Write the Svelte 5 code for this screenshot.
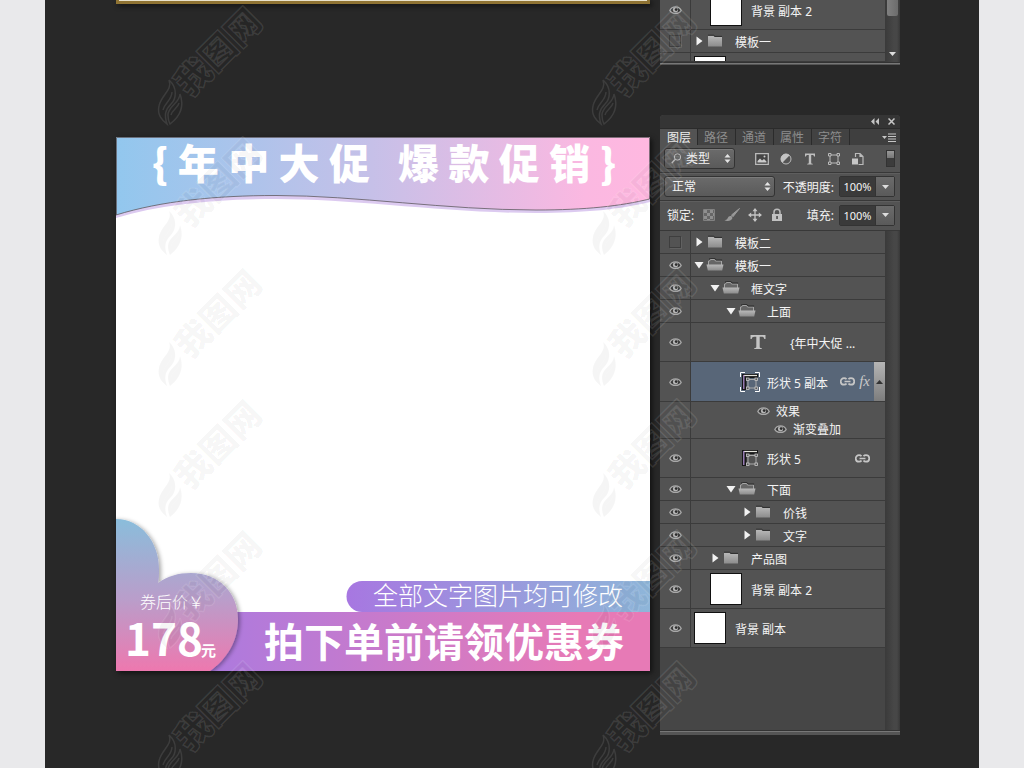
<script>
    let tab = $state('图层');
    const tabs = ['图层', '路径', '通道', '属性', '字符'];

    let layers = $state([
        { name: '模板二', kind: 'closed', level: 0, visible: false },
        { name: '模板一', kind: 'open', level: 0, visible: true },
        { name: '框文字', kind: 'open', level: 1, visible: true },
        { name: '上面', kind: 'open', level: 2, visible: true },
        { name: '{年中大促 ...', kind: 'text', level: 3, visible: true },
        { name: '形状 5 副本', kind: 'shape', level: 3, visible: true, selected: true },
        { name: '', kind: 'effects', level: 3, visible: true },
        { name: '形状 5', kind: 'shape', level: 3, visible: true },
        { name: '下面', kind: 'open', level: 2, visible: true },
        { name: '价钱', kind: 'closed', level: 3, visible: true },
        { name: '文字', kind: 'closed', level: 3, visible: true },
        { name: '产品图', kind: 'closed', level: 1, visible: true },
        { name: '背景 副本 2', kind: 'image', level: 1, visible: true },
        { name: '背景 副本', kind: 'image', level: 0, visible: true },
    ]);

    let previous = $state([
        { name: '背景 副本 2', kind: 'image', level: 1, visible: true },
        { name: '模板一', kind: 'closed', level: 0, visible: false },
    ]);

    const stampColumns = [113, 547];
    const stampRows = [8, 139, 270, 401, 532, 663];
</script>

{#snippet eye()}
    <svg width="13" height="10" viewBox="0 0 13 10">
        <path d="M.8 5.400C3 .6 10 .6 12.200 5.400 10 9.400 3 9.400.8 5.400Z" fill="#3a3a3a" stroke="#a8a8a8" stroke-width="1.300" />
        <circle cx="6.500" cy="4.800" r="2.600" fill="#b4b4b4" />
        <circle cx="7.200" cy="4.600" r="1.400" fill="#2c2c2c" />
    </svg>
{/snippet}

{#snippet link()}
    <svg width="15" height="9" viewBox="0 0 15 9" fill="none" stroke="#c6c6c6" stroke-width="1.700">
        <path d="M6.500 2.300C5.800 1.300 5 1.200 4 1.200a3.200 3.200 0 0 0 0 6.500c1 0 1.900-.2 2.500-1.200M8.500 2.300c.7-1 1.500-1.100 2.500-1.100a3.200 3.200 0 0 1 0 6.500c-1 0-1.900-.2-2.500-1.200M4.500 4.500h6" />
    </svg>
{/snippet}

{#snippet updown()}
    <svg class="updown" width="7" height="9" viewBox="0 0 7 9" fill="#e4e4e4">
        <path d="M3.500 0 6.500 3.500H.5zM3.500 9 .5 5.500h6z" />
    </svg>
{/snippet}

{#snippet folder(open)}
    {#if open}
        <svg class="arrow" width="10" height="10" viewBox="0 0 10 10"><path d="M.5 2h9L5 8.500z" fill="#f2f2f2" /></svg>
        <svg class="folder" width="18" height="14" viewBox="0 0 18 14">
            <path d="M2.500 7V3h1l1-1.500h4L9.500 3h6v4" fill="#666" stroke="#a6a6a6" />
            <path d="M3 1.200 4.400.4h4.500l1.200 1.600h6" fill="none" stroke="#2d2d2d" />
            <path d="M.5 6.500h17L16.200 12.500H1.800z" fill="url(#metal)" />
        </svg>
    {:else}
        <svg class="arrow" width="10" height="10" viewBox="0 0 10 10"><path d="M2.500.5 8.500 5l-6 4.500z" fill="#f2f2f2" /></svg>
        <svg class="folder" width="18" height="14" viewBox="0 0 18 14">
            <path d="M2 12.500V1.800h5.200L8.800 3H16v9.500z" fill="url(#metal)" />
            <path d="M2 1.200h5.500L9 2.400h7" fill="none" stroke="#2d2d2d" />
        </svg>
    {/if}
{/snippet}

{#snippet row(layer)}
    <li class="row {layer.kind}" class:selected={layer.selected}>
        <div class="visibility">
            {#if layer.kind !== 'effects'}
                <button
                    aria-label="切换可见性 {layer.name}"
                    aria-pressed={layer.visible}
                    onclick={() => (layer.visible = !layer.visible)}
                >
                    {#if layer.visible}
                        {@render eye()}
                    {:else}
                        <span class="hidden-box"></span>
                    {/if}
                </button>
            {/if}
        </div>
        <div class="layer level-{layer.level}">
            {#if layer.kind === 'open' || layer.kind === 'closed'}
                {@render folder(layer.kind === 'open')}
                <span class="name">{layer.name}</span>
            {:else if layer.kind === 'image'}
                <span class="thumb"></span>
                <span class="name">{layer.name}</span>
            {:else if layer.kind === 'text'}
                <svg class="type" width="16" height="16" viewBox="0 0 16 16">
                    <path d="M.5 1h15v4h-1.200c-.3-1.600-1-2.300-2.600-2.300H9.700v10c0 1 .5 1.300 2 1.300v1H4.300v-1c1.500 0 2-.3 2-1.300v-10h-2c-1.600 0-2.300.7-2.600 2.300H.5z" fill="#c4c4c4" />
                </svg>
                <span class="name">{layer.name}</span>
            {:else if layer.kind === 'shape'}
                <svg class="vector" width="20" height="20" viewBox="0 0 20 20">
                    <path d="M2 18V2h16v4H6.500v12z" fill="#171717" />
                    <path d="M4 3.500h13" stroke="#e4e4dc" stroke-width="1.200" />
                    <path d="M3.800 17V3" stroke="#b694d8" stroke-width="1.200" />
                    <path d="M8 7.500h8v8.500H8z" fill="none" stroke="#aaa" />
                    <g fill="#555" stroke="#c9c9c9" stroke-width=".8">
                        <rect x="6.500" y="6" width="2.500" height="2.500" /><rect x="15" y="6" width="2.500" height="2.500" />
                        <rect x="6.500" y="15" width="2.500" height="2.500" /><rect x="15" y="15" width="2.500" height="2.500" />
                    </g>
                    {#if layer.selected}
                        <path d="M.5 5V.5H5M15 .5h4.500V5M19.500 15v4.500H15M5 19.500H.5V15" fill="none" stroke="#fff" />
                    {/if}
                </svg>
                <span class="name">{layer.name}</span>
                <span class="marks">
                    {@render link()}
                    {#if layer.selected}
                        <i>fx</i>
                        <button class="collapse" aria-label="收起效果">
                            <svg width="7" height="4" viewBox="0 0 7 4"><path d="M3.500 0 7 4H0z" fill="#333" /></svg>
                        </button>
                    {/if}
                </span>
            {:else}
                <div class="effect">{@render eye()}<span>效果</span></div>
                <div class="effect nested">{@render eye()}<span>渐变叠加</span></div>
            {/if}
        </div>
    </li>
{/snippet}

<svg class="defs" width="0" height="0" aria-hidden="true">
    <linearGradient id="metal" x2="0" y2="1">
        <stop stop-color="#b9b9b9" />
        <stop offset="1" stop-color="#8c8c8c" />
    </linearGradient>
</svg>

<main>
    <section class="pair top">
        <div class="poster-edge"></div>
        <div class="panel tail">
            <div class="list">
                <ul>
                    {#each previous as layer}
                        {@render row(layer)}
                    {/each}
                    <li class="row cut">
                        <div class="visibility"></div>
                        <div class="layer level-0"><span class="thumb"></span></div>
                    </li>
                </ul>
                <div class="scrollbar">
                    <span class="handle"></span>
                    <svg width="7" height="4" viewBox="0 0 7 4"><path d="M0 0h7L3.500 4z" fill="#ddd" /></svg>
                </div>
            </div>
            <div class="foot"></div>
        </div>
    </section>

    <section class="pair">
        <svg class="poster" viewBox="0 0 534 534" lang="zh-CN">
            <defs>
                <linearGradient id="sky">
                    <stop stop-color="#92c7ee" />
                    <stop offset=".48" stop-color="#c6c0e8" />
                    <stop offset=".88" stop-color="#fbb8e1" />
                    <stop offset="1" stop-color="#ffb8e0" />
                </linearGradient>
                <linearGradient id="heart" x2="0" y2="1">
                    <stop stop-color="#8abddb" />
                    <stop offset=".5" stop-color="#ba9dca" />
                    <stop offset=".95" stop-color="#ef77ae" />
                </linearGradient>
                <linearGradient id="pill">
                    <stop stop-color="#a777e1" />
                    <stop offset="1" stop-color="#8eb6d9" />
                </linearGradient>
                <linearGradient id="bar">
                    <stop stop-color="#a77ae2" />
                    <stop offset=".85" stop-color="#e77ab6" />
                </linearGradient>
                <filter id="soft" x="-20%" y="-20%" width="140%" height="140%">
                    <feDropShadow dx="2" dy="1" stdDeviation="2" flood-opacity=".35" />
                </filter>
                <clipPath id="frame"><path d="M0 0h534v534H0z" /></clipPath>
            </defs>
            <path d="M0 0h534v534H0z" fill="#fff" />
            <path d="M0 0V81C45 67 100 62 160 62 240 62 330 76 420 76 470 76 505 72 534 65V0z" fill="#dccaf0" />
            <path d="M0 0V78C45 64 100 58.500 160 58.500 240 58.500 330 73 420 73 470 73 505 69 534 62V0z" fill="url(#sky)" />
            <path d="M.5 78V.5h533V62C505 69 470 73 420 73 330 73 240 58.500 160 58.500 100 58.500 45 64 0 78" fill="none" stroke="#5f5a60" stroke-width=".8" />
            <text class="title" x="268" y="42">{'{ 年 中 大 促   爆 款 促 销 }'}</text>
            <path d="M534 444H246a15.500 15.500 0 0 0 0 31h288z" fill="url(#pill)" />
            <text class="note" x="382" y="468">全部文字图片均可修改</text>
            <path d="M60 475h474v59H60z" fill="url(#bar)" />
            <text class="coupon" x="328" y="520">拍下单前请领优惠券</text>
            <g clip-path="url(#frame)">
                <path d="M-9 382H0C25 382 43 405 43 432 43 438 43 442 42 446 52 439 62 436 75 436 103 436 122 456 122 482 122 504 111 522 94 534L80 544H-9z" fill="url(#heart)" filter="url(#soft)" />
            </g>
            <text class="caption" x="24" y="471">券后价￥</text>
            <text class="price" x="9" y="519">178</text>
            <text class="unit" x="85" y="519">元</text>
        </svg>

        <div class="panel">
            <header>
                <svg width="8" height="7" viewBox="0 0 8 7" fill="#c4c4c4"><path d="M3.500 0v7L0 3.500zM8 0v7L4.500 3.500z" /></svg>
                <svg width="7" height="7" viewBox="0 0 7 7"><path d="m.5.5 6 6M6.500.5l-6 6" stroke="#c8c8c8" stroke-width="1.500" /></svg>
            </header>
            <nav>
                {#each tabs as name}
                    <button class:active={tab === name} onclick={() => (tab = name)}>{name}</button>
                {/each}
                <svg class="menu" width="14" height="9" viewBox="0 0 14 9"><path d="M0 3h5L2.500 6z" fill="#c6c6c6" /><path d="M6 1h8M6 3.500h8M6 6h8M6 8.500h8" stroke="#c6c6c6" /></svg>
            </nav>
            <div class="tools filter">
                <div class="pick">
                    <svg class="lens" width="11" height="11" viewBox="0 0 11 11" fill="none" stroke="#bbb"><circle cx="6.500" cy="4" r="3.200" /><path d="M4 6.500.8 10" stroke-width="1.500" /></svg>
                    <select aria-label="滤镜类型"><option>类型</option></select>
                    {@render updown()}
                </div>
                <div class="icons">
                    <button aria-label="像素图层"><svg width="14" height="14" viewBox="0 0 14 14"><path d="M.7 1.700h12.600v10.600H.7z" fill="#444" stroke="#bbb" stroke-width="1.300" /><path d="M2.500 10.500V9L5 6.500 7 8.500l2-1.500 2.500 2.500v1z" fill="#ccc" /><circle cx="9.500" cy="4.500" r="1" fill="#ccc" /></svg></button>
                    <button aria-label="调整图层"><svg width="14" height="14" viewBox="0 0 14 14"><circle cx="7" cy="7" r="5" fill="#555" stroke="#bbb" /><path d="M10.700 3.300a5.200 5.200 0 1 0-7.400 7.400z" fill="#c4c4c4" /></svg></button>
                    <button aria-label="文字图层"><svg width="14" height="14" viewBox="0 0 14 14"><path d="M2 1.500h10v3h-1c-.2-1.200-.6-1.600-2-1.600H8.200v7.600c0 1 .3 1.200 1.600 1.200v.8H4.200v-.8c1.300 0 1.600-.2 1.600-1.200V2.900H5c-1.400 0-1.800.4-2 1.600H2z" fill="#bebebe" /></svg></button>
                    <button aria-label="形状图层"><svg width="14" height="14" viewBox="0 0 14 14" fill="#535353" stroke="#bbb"><path d="M3 3h8v8H3z" /><path d="M1.500 1.500h2.500v2.500H1.500zM10 1.500h2.500v2.500H10zM1.500 10h2.500v2.500H1.500zM10 10h2.500v2.500H10z" /></svg></button>
                    <button aria-label="智能对象"><svg width="14" height="14" viewBox="0 0 14 14"><path d="M4.500 5V1.500h4.500l3 3v8H7.500M9 1.500v3h3" fill="none" stroke="#bbb" stroke-width="1.200" /><path d="M1 6.500h6v6H1z" fill="#c6c6c6" /></svg></button>
                </div>
                <button class="switch" aria-label="打开或关闭图层过滤"><span></span></button>
            </div>
            <div class="tools">
                <div class="pick wide">
                    <select aria-label="混合模式"><option>正常</option></select>
                    {@render updown()}
                </div>
                <label for="opacity">不透明度:</label>
                <div class="value">
                    <input id="opacity" value="100%" />
                    <button aria-label="不透明度滑块"><svg width="7" height="4" viewBox="0 0 7 4"><path d="M0 0h7L3.500 4z" fill="#ddd" /></svg></button>
                </div>
            </div>
            <div class="tools last">
                <span class="lock">锁定:</span>
                <div class="icons locks">
                    <button aria-label="锁定透明像素"><svg width="14" height="14" viewBox="0 0 14 14"><path d="M1.500 1.500h11v11h-11z" fill="#666" stroke="#818181" /><path d="M2 2h3v3H2zM8 2h3v3H8zM5 5h3v3H5zM2 8h3v3H2zM8 8h3v3H8zM11 5h1v3h-1zM5 11h3v1H5z" fill="#8f8f8f" /></svg></button>
                    <button aria-label="锁定图像像素"><svg width="16" height="14" viewBox="0 0 16 14"><path d="M15.500.5 7.500 7 9 8.700z" fill="#999" stroke="#999" /><path d="M7.500 8C5 7.500 4 9 3.500 10.500 3 11.800 1.500 12 .5 12c2 1.500 7 1.500 8-2z" fill="#999" /></svg></button>
                    <button aria-label="锁定位置"><svg width="14" height="14" viewBox="0 0 14 14" fill="#c4c4c4"><path d="M7 0l2.500 3.200h-5zM7 14l2.500-3.200h-5zM0 7l3.200-2.500v5zM14 7l-3.200-2.500v5z" /><path d="M7 3v8M3 7h8" stroke="#c4c4c4" stroke-width="1.300" /></svg></button>
                    <button aria-label="锁定全部"><svg width="14" height="14" viewBox="0 0 14 14"><path d="M4 7V4.200a3 3 0 0 1 6 0V7" fill="none" stroke="#bbb" stroke-width="1.500" /><path d="M2 6h10v7H2z" fill="#c2c2c2" /><path d="M6.300 8h1.500v3H6.300z" fill="#444" /></svg></button>
                </div>
                <label for="fill">填充:</label>
                <div class="value">
                    <input id="fill" value="100%" />
                    <button aria-label="填充滑块"><svg width="7" height="4" viewBox="0 0 7 4"><path d="M0 0h7L3.500 4z" fill="#ddd" /></svg></button>
                </div>
            </div>
            <div class="list full">
                <ul>
                    {#each layers as layer}
                        {@render row(layer)}
                    {/each}
                </ul>
                <div class="scrollbar"></div>
            </div>
            <div class="foot"></div>
        </div>
    </section>

    <svg class="stamps" aria-hidden="true">
        {#each stampRows as y}
            {#each stampColumns as x}
                <g transform="translate({x} {y})">
                    <path d="M11 72C15 82 3 87 1 98-1 107 4 112 9 116 6 107 7 102 13 96 18 91 20 80 11 72Z" />
                    <path d="M22 86C22 95 10 98 10 107 10 111 11 114 12 116 20 110 27 100 22 86Z" />
                    <path d="M5 102C7 94 14 92 14 84M13 107C14 102 20 100 21 95" fill="none" />
                    <text transform="translate(32 90) rotate(-45)">我图网</text>
                </g>
            {/each}
        {/each}
    </svg>
</main>

<style>
    :global(body) {
        background: #e9e9eb;
    }

    main {
        position: relative;
        margin: 0 45px;
        padding: 0 79px 34px 71px;
        background: #282828;
        overflow: hidden;
        font-family: 'Noto Sans', 'Noto Sans CJK SC', sans-serif;
        font-size: 12px;
        color: #f4f4f4;
    }

    button,
    input,
    select {
        font: inherit;
        color: inherit;
        margin: 0;
        padding: 0;
        border: none;
        background: none;
    }

    button {
        display: flex;
        align-items: center;
        justify-content: center;
    }

    svg {
        display: block;
        flex: none;
    }

    ul {
        list-style: none;
        margin: 0;
        padding: 0;
        flex: 1;
    }

    .defs {
        position: absolute;
    }

    .pair {
        display: grid;
        grid-template-columns: minmax(0, 1fr) 240px;
        column-gap: 10px;
        align-items: start;
    }

    .top {
        margin-bottom: 50px;
    }

    .poster-edge {
        height: 1px;
        background: #e9e2cc;
        border: solid #8f7333;
        border-width: 0 3px 3px;
        box-shadow: 2px 2px 5px #111;
    }

    /* poster artwork */

    .poster {
        width: 100%;
        margin-top: 22px;
        box-shadow: 2px 2px 5px #111;
        font-family: 'Noto Sans CJK SC', sans-serif;
    }

    .poster text {
        fill: #fff;
        white-space: pre;
    }

    .poster .title,
    .poster .note,
    .poster .coupon {
        text-anchor: middle;
    }

    .poster .title {
        font-size: 41px;
        font-weight: 900;
    }

    .poster .note {
        font-size: 25px;
        font-weight: 300;
    }

    .poster .coupon {
        font-size: 40px;
        font-weight: 700;
    }

    .poster .caption {
        font-size: 16px;
        font-weight: 300;
    }

    .poster .price {
        font-size: 44px;
        font-weight: 700;
    }

    .poster .unit {
        font-size: 15px;
        font-weight: 700;
    }

    /* layers panel */

    .panel {
        background: #535353;
        border-radius: 4px 4px 0 0;
        overflow: hidden;
    }

    .tail {
        display: flex;
        flex-direction: column;
        justify-content: flex-end;
        height: 65px;
        border-radius: 0;
    }

    header {
        display: flex;
        align-items: center;
        justify-content: flex-end;
        gap: 9px;
        height: 13px;
        padding-right: 5px;
        background: #353535;
    }

    nav {
        display: flex;
        align-items: center;
        height: 16px;
        background: #3f3f3f;
        border-top: 1px solid #2b2b2b;
    }

    nav button {
        height: 16px;
        padding: 0 7px 0 6px;
        border-right: 1px solid #2b2b2b;
        background: #424242;
        color: #8d8d8d;
    }

    nav button:first-child {
        padding-left: 7px;
        padding-right: 6px;
    }

    nav button.active {
        background: #535353;
        color: #eee;
    }

    nav .menu {
        margin-left: auto;
        margin-right: 4px;
    }

    .tools {
        display: flex;
        align-items: center;
        height: 27px;
        padding: 0 5px 0 4px;
        border-bottom: 1px solid #383838;
    }

    .tools + .tools {
        box-shadow: inset 0 1px #5e5e5e;
    }

    .tools.last {
        height: 28px;
        padding-bottom: 1px;
    }

    .pick {
        display: flex;
        align-items: center;
        box-sizing: border-box;
        width: 71px;
        height: 21px;
        padding: 0 3px 0 6px;
        border: 1px solid #333;
        border-radius: 3px;
        background: linear-gradient(#6b6b6b, #5a5a5a);
        box-shadow: inset 0 1px #7c7c7c;
    }

    .pick select {
        flex: 1;
        min-width: 0;
        height: 19px;
        appearance: none;
        outline: none;
    }

    .lens {
        margin-right: 4px;
    }

    .pick.wide {
        width: 111px;
    }

    .pick.wide select {
        padding-left: 1px;
    }

    .icons {
        display: flex;
        gap: 10px;
        margin-left: 20px;
    }

    .icons.locks {
        gap: 8px;
        margin-left: 8px;
    }

    .switch {
        align-items: flex-start;
        width: 9px;
        height: 17px;
        margin-left: auto;
        border: 1px solid #333;
        background: #3c3c3c;
    }

    .switch span {
        width: 7px;
        height: 7px;
        background: linear-gradient(#999, #777);
    }

    .tools label {
        margin-left: auto;
        margin-right: 5px;
    }

    .lock {
        margin-left: 3px;
    }

    .value {
        display: flex;
        box-sizing: border-box;
        width: 56px;
        height: 21px;
        border: 1px solid #333;
        border-radius: 2px;
    }

    .value input {
        width: 35px;
        min-width: 0;
        background: #3a3a3a;
        font-size: 11px;
        text-align: center;
        outline: none;
    }

    .value button {
        flex: 1;
        border-left: 1px solid #333;
        background: linear-gradient(#6b6b6b, #5a5a5a);
    }

    .list {
        display: flex;
        background: #464646;
    }

    .tail .list {
        align-items: stretch;
    }

    .full {
        min-height: 499px;
    }

    .scrollbar {
        display: flex;
        flex-direction: column;
        align-items: center;
        justify-content: space-between;
        box-sizing: border-box;
        width: 15px;
        padding-bottom: 6px;
        background: linear-gradient(90deg, #3a3a3a, #474747 60%, #474747 80%, #383838);
    }

    .handle {
        width: 11px;
        height: 25px;
        border-radius: 2px;
        background: linear-gradient(90deg, #808080, #6c6c6c);
    }

    .foot {
        height: 4px;
        border-top: 1px solid #333;
        background: #555;
        box-shadow: inset 0 1px #777;
    }

    .tail .foot {
        height: 2px;
        flex: none;
    }

    .row {
        display: flex;
        box-sizing: border-box;
        height: 23px;
        background: #535353;
        border-bottom: 1px solid #3b3b3b;
        white-space: pre;
    }

    .row.text,
    .row.shape,
    .row.image {
        height: 39px;
    }

    .row.selected {
        height: 40px;
    }

    .row.effects {
        height: 37px;
    }

    .row.cut {
        height: 9px;
        overflow: hidden;
    }

    .row.cut .layer {
        align-items: flex-start;
        padding-top: 3px;
    }

    .visibility {
        display: flex;
        align-items: center;
        justify-content: center;
        width: 30px;
        border-right: 1px solid #3b3b3b;
    }

    .hidden-box {
        width: 10px;
        height: 10px;
        border: 1px solid #3e3e3e;
        box-shadow: 1px 1px #616161;
    }

    .layer {
        flex: 1;
        display: flex;
        align-items: center;
    }

    .name {
        padding-top: 2px;
    }

    .level-0 {
        padding-left: 3px;
    }

    .level-1 {
        padding-left: 19px;
    }

    .level-2 {
        padding-left: 35px;
    }

    .level-3 {
        padding-left: 51px;
    }

    .selected .layer {
        background: #586678;
    }

    .folder {
        margin: 0 11px 0 2px;
    }

    .thumb {
        box-sizing: border-box;
        width: 32px;
        height: 32px;
        margin-right: 9px;
        border: 1px solid #111;
        background: #fff;
    }

    .type {
        margin: 0 24px 0 8px;
    }

    .vector {
        margin: 0 7px 0 -2px;
    }

    .marks {
        display: flex;
        align-items: center;
        align-self: stretch;
        gap: 4px;
        margin-left: auto;
        padding-right: 15px;
    }

    .selected .marks {
        padding-right: 0;
    }

    .marks i {
        font-family: 'Liberation Serif', serif;
        font-size: 15px;
        color: #c9c9c9;
    }

    .collapse {
        align-self: stretch;
        width: 11px;
        background: linear-gradient(#b5b5b5, #7d7d7d);
    }

    .effects .layer {
        flex-direction: column;
        align-items: flex-start;
    }

    .effect {
        display: flex;
        align-items: center;
        gap: 6px;
        height: 18px;
        padding-left: 15px;
    }

    .effect.nested {
        padding-left: 32px;
    }

    /* repeated stamp laid over the whole sheet */

    .stamps {
        position: absolute;
        inset: 0;
        width: 100%;
        height: 100%;
        pointer-events: none;
        fill: rgba(0, 0, 0, 0.04);
        stroke: rgba(255, 255, 255, 0.1);
        stroke-width: 1.5px;
        font-family: 'Noto Sans CJK SC', sans-serif;
        font-size: 35px;
        font-weight: 900;
    }
</style>
